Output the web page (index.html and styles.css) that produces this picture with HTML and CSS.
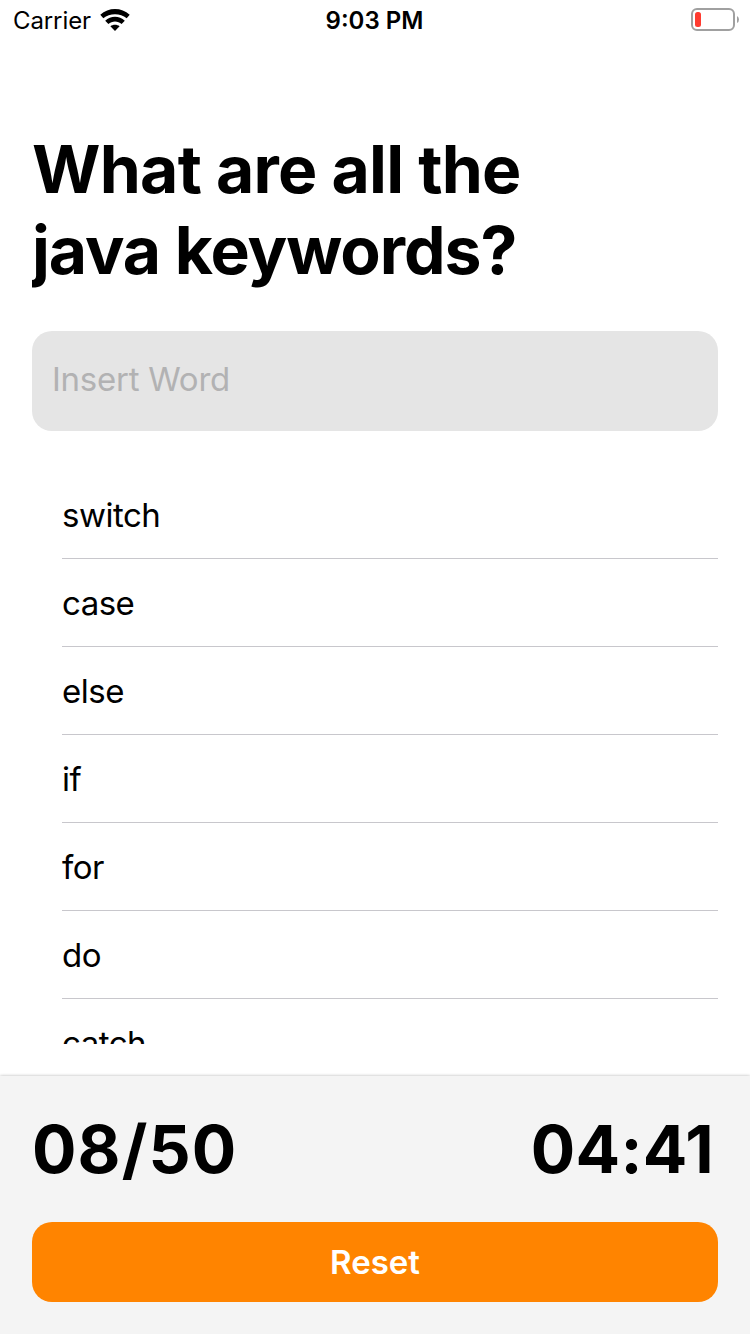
FILE: index.html
```html
<!DOCTYPE html>
<html lang="en">
<head>
<meta charset="utf-8">
<title>Java keywords quiz</title>
<link rel="stylesheet" href="styles.css">
</head>
<body>
<div class="app">
  <header class="status">
    <div class="carrier"><span class="carrier-name">Carrier</span>
      <svg class="wifi" width="30" height="22" viewBox="0 0 30 22"><path d="M0.3 5.8C8.4-1.8 21.6-1.8 29.7 5.8L26.7 9.3C20.2 3.9 9.8 3.9 3.3 9.3Z"/><path d="M5.2 11.8C10.6 6.4 19.4 6.4 24.8 11.8L21.6 15C18 11.6 12 11.6 8.4 15Z"/><path d="M10.4 17.2C12.9 15.2 17.1 15.2 19.6 17.2L15 22Z"/></svg>
    </div>
    <div class="clock">9:03 PM</div>
    <svg class="battery" width="50" height="24" viewBox="0 0 50 24"><rect class="shell" x="3" y="1" width="42" height="21" rx="5"/><rect class="charge" x="6" y="4" width="6" height="15" rx="2.5"/><path class="cap" d="M48 8Q50 9 50 11.5T48 15Z"/></svg>
  </header>
  <main class="content">
    <h1 class="title"><span class="line line-one">What are all the</span><span class="line line-two">java keywords?</span></h1>
    <div class="field"><span class="hint">Insert Word</span></div>
    <ul class="words">
      <li class="word">switch</li>
      <li class="word">case</li>
      <li class="word">else</li>
      <li class="word">if</li>
      <li class="word">for</li>
      <li class="word">do</li>
      <li class="word">catch</li>
    </ul>
  </main>
  <footer class="panel">
    <div class="stats"><span class="score">08/50</span><span class="timer">04:41</span></div>
    <button class="reset">Reset</button>
  </footer>
</div>
</body>
</html>
```
FILE: styles.css
```css
* { box-sizing: border-box; }
body { margin: 0; background: #fff; color: #000; font-family: Inter, "Liberation Sans", sans-serif; }
.app { display: flex; flex-direction: column; width: 750px; height: 1334px; overflow: hidden; }
.status { display: grid; grid-template-columns: 1fr auto 1fr; height: 40px; padding: 0 11px 0 13px; font-size: 24px; line-height: 42px; }
.carrier { display: flex; gap: 9px; }
.carrier-name { letter-spacing: -0.1px; }
.wifi { margin-top: 9px; }
.clock { margin-right: 3px; font-weight: 600; }
.battery { justify-self: end; margin-top: 8px; }
.shell { fill: none; stroke: #a0a0a0; stroke-width: 2; }
.charge { fill: #ff3b30; }
.cap { fill: #a0a0a0; }
.content { flex: none; height: 1036px; padding: 89px 32px 32px; }
.title { margin: 0; font-size: 66px; line-height: 81px; font-weight: 700; height: 162px; }
.line { display: block; width: max-content; white-space: nowrap; }
.line-one { letter-spacing: -0.75px; }
.line-two { letter-spacing: -1.05px; overflow: hidden; }
.field { height: 100px; margin-top: 40px; padding: 0 20px; border-radius: 20px; background: #e5e5e5; color: #b2b2b3; font-size: 33px; line-height: 96px; letter-spacing: -0.25px; }
.words { list-style: none; margin: 40px 0 0; padding: 0 0 0 30px; height: 573px; overflow: hidden; }
.word { height: 88px; border-bottom: 1px solid #c8c7cc; font-size: 33px; line-height: 88px; letter-spacing: -0.5px; }
.panel { flex: 1; padding: 33px 32px 32px; background: #f4f4f4; box-shadow: 0 0 3px rgba(0,0,0,.3); }
.stats { display: flex; justify-content: space-between; height: 80px; font-size: 66px; line-height: 80px; font-weight: 700; }
.score { letter-spacing: 1.1px; }
.timer { margin-right: 4px; letter-spacing: 0.3px; }
.reset { display: block; width: 100%; height: 80px; margin-top: 33px; border: 0; border-radius: 20px; background: #ff8400; color: #fff; font: 600 33px/80px Inter, sans-serif; padding: 0; }
```
